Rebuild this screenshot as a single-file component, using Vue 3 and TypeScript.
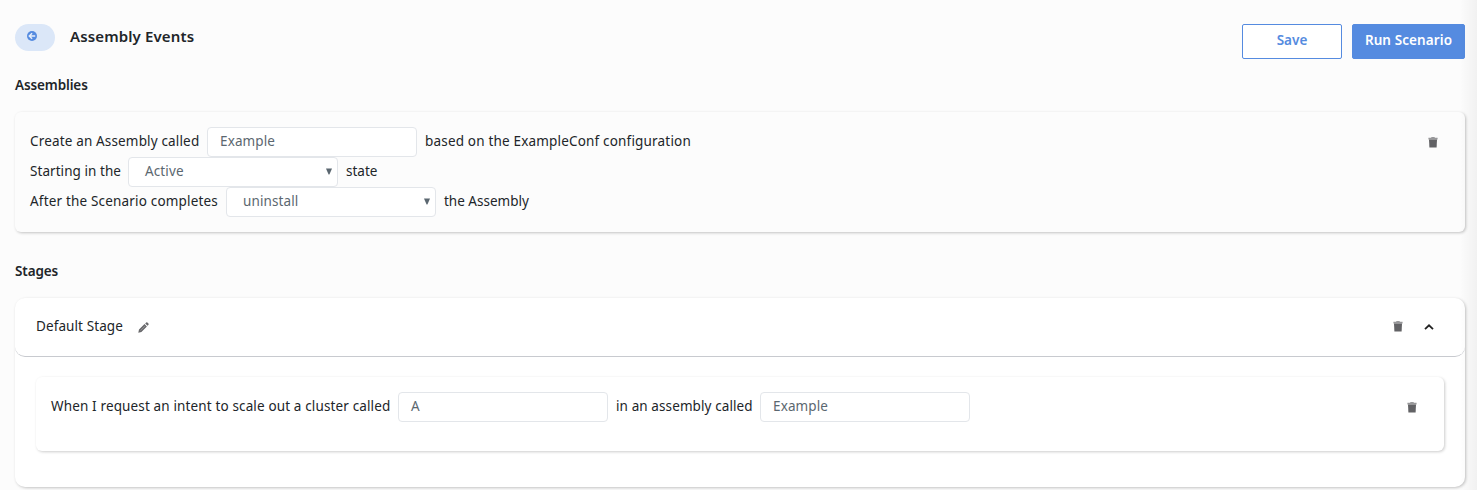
<script setup lang="ts">
import { ref } from 'vue'

const assemblyName = ref('Example')
const clusterName = ref('A')
const targetAssembly = ref('Example')
const startState = ref('Active')
const endAction = ref('uninstall')
</script>

<template>
  <main class="page">
    <header class="top">
      <button class="back" aria-label="Back">
        <svg width="10" height="10" viewBox="0 0 10 10">
          <circle cx="5" cy="5" r="5" fill="#558be0" />
          <path d="M8.2 5H2.5M5.1 2.2L2.3 5L5.1 7.8" fill="none" stroke="#e6eefa" stroke-width="1.5" />
        </svg>
      </button>
      <h1><span class="t title">Assembly Events</span></h1>
      <div class="actions">
        <button class="btn outline"><span class="t save">Save</span></button>
        <button class="btn solid"><span class="t run">Run Scenario</span></button>
      </div>
    </header>

    <h2 class="h-assemblies"><span class="t assemblies">Assemblies</span></h2>
    <section class="card assembly">
      <div class="lines">
        <div class="line">
          <span class="t create">Create an Assembly called</span>
          <div class="field">{{ assemblyName }}</div>
          <span class="t based">based on the ExampleConf configuration</span>
        </div>
        <div class="line">
          <span class="t starting">Starting in the</span>
          <div class="field select">{{ startState }}<svg class="arrow" width="6" height="7" viewBox="0 0 6 7"><path d="M0 0.5H6L3.4 6.5H2.6Z" fill="#5b6770" /></svg></div>
          <span class="t state">state</span>
        </div>
        <div class="line">
          <span class="t after">After the Scenario completes</span>
          <div class="field select">{{ endAction }}<svg class="arrow" width="6" height="7" viewBox="0 0 6 7"><path d="M0 0.5H6L3.4 6.5H2.6Z" fill="#5b6770" /></svg></div>
          <span class="t the">the Assembly</span>
        </div>
      </div>
      <svg class="trash" width="10" height="11" viewBox="0 0 10 11">
        <path d="M3.3 0H6.7V0.8H9.6V2.6H0.4V0.8H3.3Z" fill="#98989a" />
        <path d="M1 2.6H9L8.6 10.6H1.4Z" fill="#626265" />
      </svg>
    </section>

    <h2 class="h-stages"><span class="t stages">Stages</span></h2>
    <section class="card stage">
      <div class="stage-head">
        <span class="t default">Default Stage</span>
        <svg class="pencil" width="11" height="11" viewBox="0 0 11 11">
          <path d="M0.3 10.7L1 7.6L6.5 2.1L8.9 4.5L3.4 10Z M7.2 1.4L8.2 0.5Q8.8 0 9.4 0.6L10.4 1.6Q11 2.2 10.5 2.8L9.6 3.8Z" fill="#68686b" />
          <path d="M2.6 8.5L7 4.1" stroke="#a9a9ab" stroke-width="0.7" />
        </svg>
        <svg class="trash head-trash" width="10" height="11" viewBox="0 0 10 11">
          <path d="M3.3 0H6.7V0.8H9.6V2.6H0.4V0.8H3.3Z" fill="#98989a" />
          <path d="M1 2.6H9L8.6 10.6H1.4Z" fill="#626265" />
        </svg>
        <svg class="chevron" width="10" height="6" viewBox="0 0 10 6">
          <path d="M1 5.2L5 1.3L9 5.2" fill="none" stroke="#222" stroke-width="1.8" />
        </svg>
      </div>
      <div class="card step">
        <div class="line">
          <span class="t when">When I request an intent to scale out a cluster called</span>
          <div class="field">{{ clusterName }}</div>
          <span class="t inan">in an assembly called</span>
          <div class="field">{{ targetAssembly }}</div>
        </div>
        <svg class="trash" width="10" height="11" viewBox="0 0 10 11">
          <path d="M3.3 0H6.7V0.8H9.6V2.6H0.4V0.8H3.3Z" fill="#98989a" />
          <path d="M1 2.6H9L8.6 10.6H1.4Z" fill="#626265" />
        </svg>
      </div>
    </section>
    <div class="edge"></div>
  </main>
</template>

<style>
body { background: #fcfcfc; overflow: hidden; }
</style>

<style scoped>
* { box-sizing: border-box; }
.page {
  position: relative;
  width: 1477px;
  height: 490px;
  overflow: hidden;
  padding: 24px 12px 0 15px;
  background: #fcfcfc;
  color: #212529;
  font: 13.5px/20px "Noto Sans", "Open Sans", sans-serif;
}
h1, h2 { margin: 0; }
.t { display: block; flex: none; white-space: nowrap; }
.top { display: flex; height: 35px; align-items: flex-start; }
.back {
  display: flex;
  width: 40px;
  height: 27px;
  padding: 7px 0 0 12px;
  border: 0;
  border-radius: 14px;
  background: #dbe7f8;
}
h1 { margin: 1px 0 0 15px; font-size: 15px; line-height: 22px; font-weight: 600; }
.title { width: 124px; letter-spacing: 0.13px; }
.actions { display: flex; gap: 10px; margin-left: auto; }
.btn {
  display: flex;
  justify-content: center;
  height: 35px;
  padding: 5px 0 0;
  border: 1px solid #558be0;
  border-radius: 2px;
  font: 600 13.5px/20px "Noto Sans", "Open Sans", sans-serif;
}
.outline { width: 100px; background: #fff; color: #558be0; }
.solid { width: 113px; background: #558be0; color: #fff; }
.run { letter-spacing: 0.1px; }
h2 { font-size: 13.5px; line-height: 20px; font-weight: 600; letter-spacing: -0.12px; }
.h-assemblies { margin-top: 16px; }
.h-stages { margin-top: 29px; }
.assemblies { width: 73px; }
.stages { width: 43px; }
.card {
  border-radius: 6px;
  box-shadow: 1px 1px 3px rgba(0, 0, 0, 0.23);
}
.assembly {
  display: flex;
  justify-content: space-between;
  width: 1450px;
  height: 120px;
  margin-top: 17px;
  padding: 15px 27px 0 15px;
}
.trash { flex: none; margin-top: 10px; }
.line { display: flex; gap: 8px; height: 30px; }
.line .t { line-height: 29px; }
.field {
  position: relative;
  width: 210px;
  height: 30px;
  padding-left: 12px;
  border: 1px solid #e3e6ea;
  border-radius: 4px;
  background: #fff;
  color: #5b6770;
  line-height: 27px;
  letter-spacing: 0.12px;
}
.select { padding-left: 16px; }
.arrow { position: absolute; right: 5px; top: 10px; }
.create { width: 169px; letter-spacing: 0.16px; }
.based { letter-spacing: 0.18px; }
.starting { width: 90px; letter-spacing: 0.06px; }
.after { width: 188px; letter-spacing: 0.18px; }
.when { width: 339px; letter-spacing: 0.14px; }
.inan { width: 136px; letter-spacing: 0.1px; }
.stage {
  width: 1450px;
  height: 189px;
  margin-top: 17px;
  border-radius: 10px;
  background: #fff;
}
.stage-head {
  display: flex;
  height: 59px;
  padding: 0 31px 0 21px;
  border-bottom: 1px solid #c8cacf;
  border-radius: 10px;
}
.default { width: 87px; line-height: 56px; letter-spacing: 0.1px; }
.pencil { margin: 24px 0 0 15px; }
.head-trash { margin: 23px 0 0 auto; }
.chevron { margin: 26px 0 0 21px; }
.step {
  display: flex;
  justify-content: space-between;
  width: 1408px;
  height: 74px;
  margin: 20px 0 0 21px;
  padding: 15px 27px 0 15px;
  background: #fff;
  box-shadow: 1px 1px 3px rgba(0, 0, 0, 0.2);
}
.edge {
  position: absolute;
  top: 0;
  right: 0;
  width: 17px;
  height: 490px;
  background: linear-gradient(90deg, rgba(0, 0, 0, 0), rgba(0, 0, 0, 0.045));
  pointer-events: none;
}
</style>
